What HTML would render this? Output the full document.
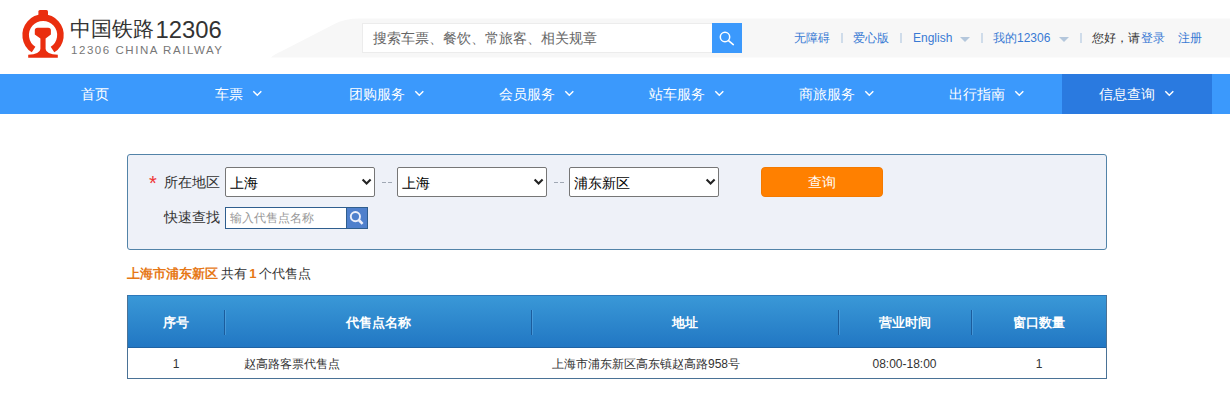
<!DOCTYPE html>
<html><head><meta charset="utf-8">
<style>
*{margin:0;padding:0;box-sizing:border-box}
html,body{width:1230px;height:410px;overflow:hidden;background:#fff;font-family:"Liberation Sans",sans-serif;color:#333}
.abs{position:absolute}
#band{position:absolute;left:0;top:0}
.logo-t1{position:absolute;left:70px;top:14px;font-size:22.5px;color:#333;line-height:28px;white-space:nowrap}
.logo-t2{position:absolute;left:71px;top:43px;font-size:11.5px;color:#777;letter-spacing:1.55px;line-height:14px;white-space:nowrap}
.search{position:absolute;left:362px;top:23px;width:350px;height:30px;background:#fff;border:1px solid #ececec;border-right:none;font-size:14px;color:#666;padding-left:10px;line-height:28px}
.sbtn{position:absolute;left:712px;top:23px;width:30px;height:30px;background:#3b99fc}
.tl{position:absolute;top:29px;font-size:12px;line-height:18px;color:#397ad4;white-space:nowrap}
.sep{position:absolute;top:33px;width:2px;height:10px;background:#cfdcea}
.tri{position:absolute;top:37px;width:0;height:0;border-left:5px solid transparent;border-right:5px solid transparent;border-top:5px solid #b4c7dc}
#nav{position:absolute;left:0;top:74px;width:1230px;height:40px;background:#3b99fc}
#nav .act{position:absolute;left:1062px;top:0;width:150px;height:40px;background:#2a7ae0}
.ni{position:absolute;top:11px;font-size:14px;line-height:18px;color:#fff;white-space:nowrap}
.chev{position:absolute;top:16px;width:10px;height:7px}
#panel{position:absolute;left:127px;top:154px;width:980px;height:96px;background:#eef1f8;border:1px solid #5283a8;border-radius:3px}
.lbl{position:absolute;font-size:14px;line-height:18px;color:#333;white-space:nowrap}
.sel{position:absolute;top:167px;width:150px;height:30px;background:#fff;border:1px solid #767676;border-radius:2px;font-size:14px;line-height:26px;padding-top:2px;padding-left:4px;color:#000}
.dsh{position:absolute;top:182px;width:4px;height:1px;background:#a0a8b4}
.dash{position:absolute;top:174px;font-size:12px;color:#999;line-height:14px}
.qbtn{position:absolute;left:761px;top:167px;width:122px;height:30px;background:#ff8000;border:1px solid #f47a00;border-radius:4px;line-height:28px;color:#fff;font-size:14px;text-align:center}
.qin{position:absolute;left:225px;top:207px;width:122px;height:22px;background:#fff;border:1px solid #2f5e8e;border-right:none;font-size:12px;color:#999;line-height:20px;padding-left:4px}
.qsb{position:absolute;left:346px;top:207px;width:22px;height:22px;background:#4f80cc;border:1px solid #2f5e8e}
.res{position:absolute;left:127px;top:264px;font-size:13px;line-height:19px;word-spacing:-1px;white-space:nowrap;color:#333}
.res b{color:#e67817}
#tbl{position:absolute;left:127px;top:295px;width:980px;height:84px;border:1px solid #4a7296;border-top:none}
#thead{position:absolute;left:127px;top:295px;width:980px;height:53px;background:linear-gradient(#3a98d7,#2177c3);border-top:1px solid #2c78bb;border-bottom:1px solid #1f63a4}
.th{position:absolute;top:16px;font-size:13px;font-weight:bold;color:#fff;line-height:20px;text-align:center;white-space:nowrap}
.vs{position:absolute;top:15px;width:1px;height:25px;background:#1b5c9c;box-shadow:1px 0 0 rgba(120,190,240,0.35)}
.td{position:absolute;top:355px;font-size:12px;color:#333;line-height:18px;white-space:nowrap}
</style></head><body>

<!-- header band -->
<svg id="band" width="1230" height="74" viewBox="0 0 1230 74">
  <path d="M271 57.5 Q274 54.5 281 51.5 L334 24.2 Q344 18.5 360 18.5 L1230 18.5 L1230 57.5 Z" fill="#f7f7f7"/>
</svg>

<!-- logo -->
<svg class="abs" style="left:15px;top:5px" width="56" height="58" viewBox="0 0 56 58">
  <g fill="#ea2e0f">
    <rect x="23.4" y="5.1" width="9.6" height="6" rx="1.5"/>
    <path d="M18.6 44.6 A17.4 17.4 0 1 1 37.5 44.6" fill="none" stroke="#ea2e0f" stroke-width="6.6"/>
    <path d="M19.8 25.2 Q19.8 22.7 22.6 22.7 L33.1 22.7 Q35.9 22.7 35.9 25.2 L35.9 29.6 L30.6 33.6 L30.6 44 Q31 49.3 42.8 49.8 L42.8 52.7 L13.2 52.7 L13.2 49.8 Q25 49.3 25.4 44 L25.4 33.6 L19.8 29.6 Z"/>
  </g>
</svg>
<div class="logo-t1"><span style="font-size:21.3px">中国铁路</span><span style="font-size:23.8px;margin-left:1.5px;position:relative;top:1.5px">12306</span></div>
<div class="logo-t2">12306 CHINA RAILWAY</div>

<div class="search">搜索车票、餐饮、常旅客、相关规章</div>
<div class="sbtn"><svg width="30" height="30" viewBox="0 0 30 30"><circle cx="13" cy="14" r="4.7" fill="none" stroke="#fff" stroke-width="1.5"/><line x1="16.5" y1="17.6" x2="21.3" y2="21.6" stroke="#fff" stroke-width="1.6" stroke-linecap="round"/></svg></div>

<div class="tl" style="left:794px">无障碍</div>
<div class="sep" style="left:841px"></div>
<div class="tl" style="left:853px">爱心版</div>
<div class="sep" style="left:900px"></div>
<div class="tl" style="left:913px">English</div>
<div class="tri" style="left:960px"></div>
<div class="sep" style="left:981px"></div>
<div class="tl" style="left:993px">我的12306</div>
<div class="tri" style="left:1059px"></div>
<div class="sep" style="left:1080px"></div>
<div class="tl" style="left:1092px;color:#333">您好，请</div>
<div class="tl" style="left:1141px">登录</div>
<div class="tl" style="left:1178px">注册</div>

<!-- nav -->
<div id="nav">
  <div class="act"></div>
</div>
<div class="ni" style="left:81px;top:85px">首页</div>
<div class="ni" style="left:215px;top:85px">车票</div>
<div class="ni" style="left:349px;top:85px">团购服务</div>
<div class="ni" style="left:499px;top:85px">会员服务</div>
<div class="ni" style="left:649px;top:85px">站车服务</div>
<div class="ni" style="left:799px;top:85px">商旅服务</div>
<div class="ni" style="left:949px;top:85px">出行指南</div>
<div class="ni" style="left:1099px;top:85px">信息查询</div>
<svg class="abs" style="left:252px;top:90px" width="11" height="8"><path d="M1.3 1.3 L5.3 5.3 L9.3 1.3" fill="none" stroke="#fff" stroke-width="1.5"/></svg>
<svg class="abs" style="left:414px;top:90px" width="11" height="8"><path d="M1.3 1.3 L5.3 5.3 L9.3 1.3" fill="none" stroke="#fff" stroke-width="1.5"/></svg>
<svg class="abs" style="left:564px;top:90px" width="11" height="8"><path d="M1.3 1.3 L5.3 5.3 L9.3 1.3" fill="none" stroke="#fff" stroke-width="1.5"/></svg>
<svg class="abs" style="left:714px;top:90px" width="11" height="8"><path d="M1.3 1.3 L5.3 5.3 L9.3 1.3" fill="none" stroke="#fff" stroke-width="1.5"/></svg>
<svg class="abs" style="left:864px;top:90px" width="11" height="8"><path d="M1.3 1.3 L5.3 5.3 L9.3 1.3" fill="none" stroke="#fff" stroke-width="1.5"/></svg>
<svg class="abs" style="left:1014px;top:90px" width="11" height="8"><path d="M1.3 1.3 L5.3 5.3 L9.3 1.3" fill="none" stroke="#fff" stroke-width="1.5"/></svg>
<svg class="abs" style="left:1164px;top:90px" width="11" height="8"><path d="M1.3 1.3 L5.3 5.3 L9.3 1.3" fill="none" stroke="#fff" stroke-width="1.5"/></svg>

<!-- panel -->
<div id="panel"></div>
<div class="lbl" style="left:149px;top:173px;color:#e33;font-size:20px;line-height:20px">*</div>
<div class="lbl" style="left:164px;top:173px">所在地区</div>
<div class="sel" style="left:225px">上海</div>
<div class="dsh" style="left:382px"></div><div class="dsh" style="left:387.5px"></div>
<div class="sel" style="left:397px">上海</div>
<div class="dsh" style="left:554px"></div><div class="dsh" style="left:559.5px"></div>
<div class="sel" style="left:569px">浦东新区</div>
<svg class="abs" style="left:361px;top:178px" width="12" height="9"><path d="M1.6 1.6 L5.6 5.6 L9.6 1.6" fill="none" stroke="#222" stroke-width="2.1"/></svg>
<svg class="abs" style="left:533px;top:178px" width="12" height="9"><path d="M1.6 1.6 L5.6 5.6 L9.6 1.6" fill="none" stroke="#222" stroke-width="2.1"/></svg>
<svg class="abs" style="left:705px;top:178px" width="12" height="9"><path d="M1.6 1.6 L5.6 5.6 L9.6 1.6" fill="none" stroke="#222" stroke-width="2.1"/></svg>
<div class="qbtn">查询</div>
<div class="lbl" style="left:164px;top:208px">快速查找</div>
<div class="qin">输入代售点名称</div>
<div class="qsb"><svg width="20" height="20" viewBox="0 0 20 20" style="position:absolute;left:0;top:0"><circle cx="8.4" cy="8.6" r="4.6" fill="none" stroke="#eef0fa" stroke-width="1.9"/><line x1="11.8" y1="12" x2="15.6" y2="15.8" stroke="#eef0fa" stroke-width="2.6"/></svg></div>

<div class="res"><b>上海市浦东新区</b> 共有 <b>1</b> 个代售点</div>

<div id="thead"></div>
<div id="tbl"></div>
<div class="th" style="left:127px;width:98px;top:313px">序号</div>
<div class="th" style="left:225px;width:306px;top:313px">代售点名称</div>
<div class="th" style="left:531px;width:307px;top:313px">地址</div>
<div class="th" style="left:838px;width:133px;top:313px">营业时间</div>
<div class="th" style="left:971px;width:136px;top:313px">窗口数量</div>
<div class="vs" style="left:224px;top:310px"></div>
<div class="vs" style="left:531px;top:310px"></div>
<div class="vs" style="left:838px;top:310px"></div>
<div class="vs" style="left:971px;top:310px"></div>
<div class="td" style="left:127px;width:98px;text-align:center">1</div>
<div class="td" style="left:244px">赵高路客票代售点</div>
<div class="td" style="left:552px">上海市浦东新区高东镇赵高路958号</div>
<div class="td" style="left:838px;width:133px;text-align:center">08:00-18:00</div>
<div class="td" style="left:971px;width:136px;text-align:center">1</div>
</body></html>
